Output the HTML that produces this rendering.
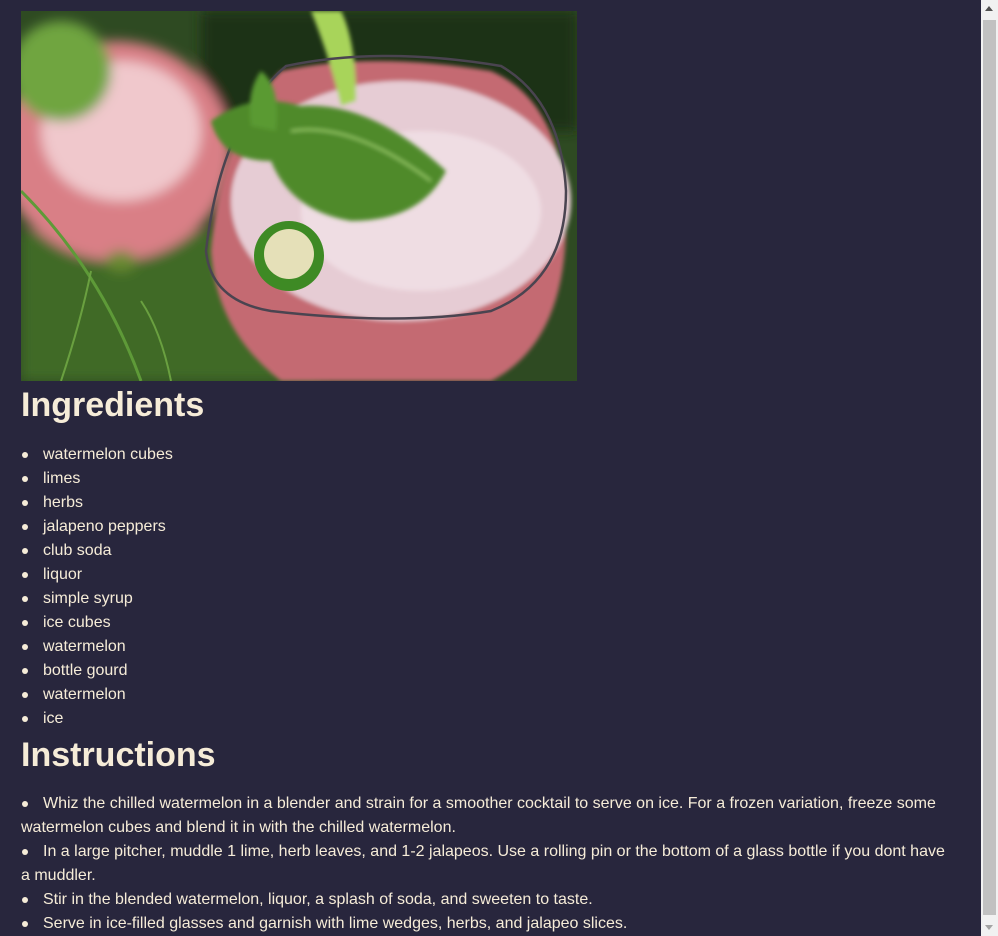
<!DOCTYPE html>
<html><head><meta charset="utf-8"><style>
html,body{margin:0;padding:0;}
body{background:#28263d;color:#f6ecd8;font-family:"Liberation Sans",sans-serif;width:998px;height:936px;overflow:hidden;position:relative;}
.wrap{padding:11px 0 0 21px;width:926px;}
svg.pic{display:block;}
h1{font-size:34px;line-height:48px;margin:0 0 13px;font-weight:bold;}
ul{list-style:none;margin:0;padding:1px 0 0;}
ul.ins{padding-top:0;}
li{font-size:16px;line-height:24px;position:relative;}
li:before{content:"";position:absolute;width:6px;height:6px;border-radius:50%;background:#f6ecd8;left:1px;top:9px;}
ul.ing li{padding-left:22px;}
ul.ins li{text-indent:22px;}
.sb{position:absolute;right:0;top:0;width:17px;height:936px;background:#f1f1f1;}
.thumb{position:absolute;left:2px;top:20px;width:13px;height:895px;background:#c1c1c1;}
.arr{position:absolute;left:4px;width:0;height:0;border-left:4px solid transparent;border-right:4px solid transparent;}
</style></head><body>
<div class="wrap">
<svg class="pic" width="556" height="370" viewBox="0 0 556 370">
<defs>
<filter id="b"><feGaussianBlur stdDeviation="6"/></filter>
<filter id="b2"><feGaussianBlur stdDeviation="2"/></filter>
</defs>
<rect width="556" height="370" fill="#2e4a22"/>
<g filter="url(#b)">
<rect x="180" y="0" width="376" height="120" fill="#1f3218"/>
<rect x="0" y="220" width="300" height="150" fill="#3f6a28"/>
<ellipse cx="95" cy="140" rx="115" ry="110" fill="#d97f86"/>
<ellipse cx="100" cy="120" rx="80" ry="70" fill="#f0c8cc"/>
<ellipse cx="40" cy="60" rx="50" ry="50" fill="#6fa540"/>
<ellipse cx="100" cy="250" rx="15" ry="10" fill="#6a8a30"/>
</g>
<g filter="url(#b2)">
<path d="M190 240 Q200 120 260 60 Q350 40 470 60 Q540 90 545 200 Q548 330 470 370 L260 370 Q195 320 190 240Z" fill="#c46a72"/>
<ellipse cx="380" cy="190" rx="170" ry="120" fill="#e6ccd4"/>
<ellipse cx="400" cy="200" rx="120" ry="80" fill="#efdde3"/>
<path d="M290 0 Q310 50 320 95 L335 90 Q335 30 320 0Z" fill="#a8d45a"/>
</g>
<path d="M185 240 Q200 110 265 55 Q360 35 480 55 Q540 90 545 180 Q545 270 470 300 Q380 315 250 300 Q190 290 185 240Z" fill="none" stroke="#4a4450" stroke-width="2.5"/>
<g filter="url(#b2)">
<path d="M190 110 Q230 80 280 95 Q350 90 425 160 Q400 210 330 210 Q270 200 250 150 Q200 150 190 110Z" fill="#4f8a2c"/>
<path d="M240 60 Q260 75 255 120 L230 115 Q225 80 240 60Z" fill="#5a9a30"/>
<path d="M270 120 Q330 110 410 170" stroke="#9ccf6a" stroke-width="2" fill="none"/>
</g>
<circle cx="268" cy="245" r="35" fill="#3e8a24"/>
<circle cx="268" cy="243" r="25" fill="#e5e0b8"/>
<path d="M0 180 Q80 260 120 370" stroke="#5e9a38" stroke-width="3" fill="none"/>
<path d="M40 370 Q60 310 70 260 M150 370 Q140 320 120 290" stroke="#6aa040" stroke-width="2" fill="none"/>
</svg>
<h1>Ingredients</h1>
<ul class="ing">
<li>watermelon cubes</li><li>limes</li><li>herbs</li><li>jalapeno peppers</li><li>club soda</li><li>liquor</li><li>simple syrup</li><li>ice cubes</li><li>watermelon</li><li>bottle gourd</li><li>watermelon</li><li>ice</li>
</ul>
<h1>Instructions</h1>
<ul class="ins">
<li>Whiz the chilled watermelon in a blender and strain for a smoother cocktail to serve on ice. For a frozen variation, freeze some watermelon cubes and blend it in with the chilled watermelon.</li>
<li>In a large pitcher, muddle 1 lime, herb leaves, and 1-2 jalapeos. Use a rolling pin or the bottom of a glass bottle if you dont have a muddler.</li>
<li>Stir in the blended watermelon, liquor, a splash of soda, and sweeten to taste.</li>
<li>Serve in ice-filled glasses and garnish with lime wedges, herbs, and jalapeo slices.</li>
</ul>
</div>
<div class="sb"><div class="arr" style="top:6px;border-bottom:5px solid #505050"></div><div class="thumb"></div><div class="arr" style="bottom:6px;border-top:5px solid #a3a3a3"></div></div>
</body></html>
